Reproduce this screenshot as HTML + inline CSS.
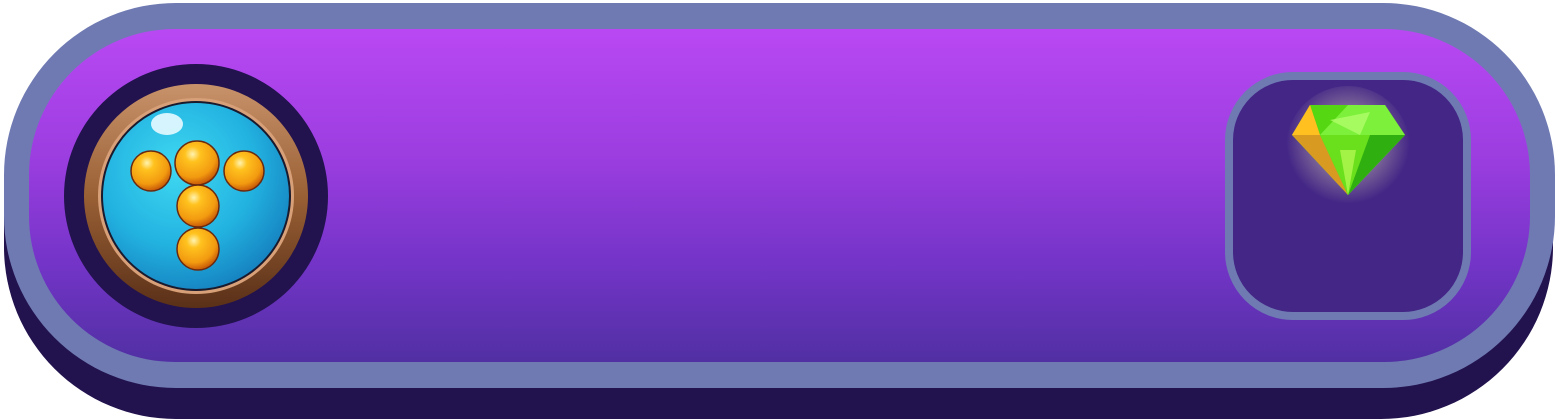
<!DOCTYPE html>
<html><head><style>
html,body{margin:0;padding:0;width:1555px;height:419px;overflow:hidden;background:#fff;}
.a{position:absolute;}
</style></head><body>
<div class="a" style="left:4px;top:34px;width:1549px;height:385px;border-radius:172px;background:#22124d;"></div>
<div class="a" style="left:4px;top:3px;width:1551px;height:385px;border-radius:172px;background:#6f7ab3;"></div>
<div class="a" style="left:29px;top:29px;width:1501px;height:333px;border-radius:146px;background:linear-gradient(#b948f3,#9a3ddf 40%,#7434c8 70%,#5130a3);"></div>
<svg class="a" style="left:0;top:0" width="1555" height="419">
<defs>
<radialGradient id="bl" cx="0.4" cy="0.35" r="0.7"><stop offset="0" stop-color="#3fd8f2"/><stop offset="0.6" stop-color="#22b2e0"/><stop offset="1" stop-color="#1580bf"/></radialGradient>
<linearGradient id="br" x1="0" y1="0" x2="0" y2="1"><stop offset="0" stop-color="#c8926a"/><stop offset="0.5" stop-color="#9a6035"/><stop offset="1" stop-color="#5a3018"/></linearGradient>
<radialGradient id="or" cx="0.4" cy="0.3" r="0.7"><stop offset="0" stop-color="#fff3b0"/><stop offset="0.25" stop-color="#ffc21e"/><stop offset="0.75" stop-color="#f29a10"/><stop offset="1" stop-color="#c85a08"/></radialGradient>
<radialGradient id="gl" cx="0.5" cy="0.45" r="0.5"><stop offset="0" stop-color="#fff6c0" stop-opacity="0.7"/><stop offset="1" stop-color="#fff6c0" stop-opacity="0"/></radialGradient>
</defs>
<circle cx="196" cy="196" r="132" fill="#22124d"/>
<circle cx="196" cy="196" r="112" fill="url(#br)"/>
<circle cx="196" cy="196" r="98" fill="#d8a078"/>
<circle cx="196" cy="196" r="95" fill="#1a1a2e"/>
<circle cx="196" cy="196" r="93" fill="url(#bl)"/>
<ellipse cx="167" cy="124" rx="16" ry="11" fill="#e8faff" opacity="0.9"/>
<g stroke="#6a2a10" stroke-width="1.5">
<circle cx="151" cy="171" r="20" fill="url(#or)"/>
<circle cx="244" cy="171" r="20" fill="url(#or)"/>
<circle cx="197" cy="163" r="22" fill="url(#or)"/>
<circle cx="198" cy="206" r="21" fill="url(#or)"/>
<circle cx="198" cy="249" r="21" fill="url(#or)"/>
</g>
<rect x="1229" y="76" width="238" height="240" rx="64" fill="#432686" stroke="#6f7ab3" stroke-width="8"/>
<circle cx="1348" cy="148" r="62" fill="url(#gl)"/>
<polygon points="1310,105 1385,105 1405,135 1348,195 1292,135" fill="#55d812"/>
<polygon points="1310,105 1292,135 1348,195 1320,135" fill="#d89a20"/>
<polygon points="1292,135 1320,135 1310,105" fill="#ffc020"/>
<polygon points="1320,135 1405,135 1348,195" fill="#6ae01c"/>
<polygon points="1370,135 1405,135 1348,195" fill="#2fb010"/>
<polygon points="1320,135 1348,105 1385,105 1405,135" fill="#7cf03a"/>
<polygon points="1330,120 1370,112 1360,135" fill="#b8ff70" opacity="0.7"/>
<polygon points="1340,150 1348,195 1356,150" fill="#c8ff60" opacity="0.6"/>
</svg>
</body></html>
